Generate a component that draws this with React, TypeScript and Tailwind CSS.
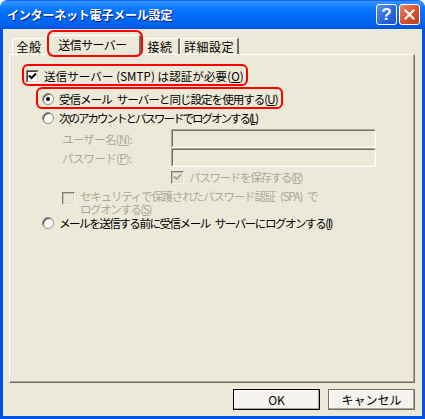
import React from "react";

const F = "font-['Noto_Sans_CJK_JP','Noto_Sans_CJK_SC',sans-serif]";

function CheckBox({ checked, disabled }: { checked?: boolean; disabled?: boolean }) {
  return (
    <span
      className={`relative inline-block w-[13px] h-[13px] shrink-0 border border-t-[#7f7d72] border-l-[#7f7d72] border-r-[#f5f4ee] border-b-[#f5f4ee] ${disabled ? "bg-[#ECE9D8]" : "bg-white"}`}
    >
      <span className={`absolute inset-0 border border-t-[#403f3a] border-l-[#403f3a] border-r-[#dcd8c6] border-b-[#dcd8c6] ${disabled ? "border-t-[#c2bfb0] border-l-[#c2bfb0]" : ""}`} />
      {checked && (
        <svg className="absolute left-[1px] top-[1px]" width="9" height="9" viewBox="0 0 9 9">
          <path d="M1 3.5 L3.5 6 L8 1.5" stroke={disabled ? "#aca899" : "#000"} strokeWidth="2" fill="none" />
        </svg>
      )}
    </span>
  );
}

function Radio({ checked }: { checked?: boolean }) {
  return (
    <span className="relative inline-block w-[12px] h-[12px] shrink-0 rounded-full bg-white border border-[#8d8a7d] shadow-[inset_1px_1px_0_#4a4943]">
      {checked && <span className="absolute left-[3px] top-[3px] w-[4px] h-[4px] rounded-full bg-black" />}
    </span>
  );
}

function Input() {
  return (
    <div className="w-[205px] h-[19px] border border-t-[#aca899] border-l-[#aca899] border-r-white border-b-white">
      <div className="w-full h-full border border-t-[#716f64] border-l-[#716f64] border-r-[#f1efe2] border-b-[#f1efe2] bg-[#ECE9D8]" />
    </div>
  );
}

function Gap() {
  return <span className="inline-block w-[5px]" />;
}

function Tab({ label, selected, first, w, t }: { label: string; selected?: boolean; first?: boolean; w: string; t: string }) {
  return (
    <div
      className={`relative flex items-center justify-center bg-[#ECE9D8] border-t border-l border-white border-r-2 border-r-[#716f64] ${first ? "rounded-tl-[3px]" : ""} ${w} ${
        selected ? "h-[20px] z-10 -mb-[1px] -ml-[2px] pb-[1px]" : "h-[16px] pt-[1px]"
      }`}
    >
      <span className={`text-[12px] leading-none text-black ${t}`}>{label}</span>
    </div>
  );
}

export default function App() {
  return (
    <div className={`w-[425px] h-[419px] ${F} bg-[#0054E3] rounded-t-[8px] flex flex-col overflow-hidden relative select-none`}>
      {/* title bar */}
      <div className="h-[29px] shrink-0 flex items-center pl-[7px] pr-[5px] rounded-t-[8px] bg-[linear-gradient(to_bottom,#0058EE_0%,#3A93FF_6%,#288EFF_12%,#127DFF_25%,#036FFC_45%,#0262EE_85%,#0057E5_93%,#0054E3_100%)]">
        <span className="text-white font-bold text-[12px] tracking-[-0.2px] [text-shadow:1px_1px_0_#0a1f80] flex-1 pt-[1px]">インターネット電子メール設定</span>
        <div className="flex gap-[2px]">
          <div className="w-[21px] h-[21px] rounded-[3px] border border-white bg-[linear-gradient(135deg,#5b93f4_0%,#2a67e4_55%,#1c54c8_100%)] flex items-center justify-center">
            <span className="text-white font-bold text-[17px] leading-none font-['Liberation_Sans',sans-serif]">?</span>
          </div>
          <div className="w-[21px] h-[21px] rounded-[3px] border border-white bg-[linear-gradient(135deg,#e8866a_0%,#d8502c_55%,#c03c18_100%)] flex items-center justify-center">
            <svg width="11" height="11" viewBox="0 0 11 11">
              <path d="M1.5 1.5 L9.5 9.5 M9.5 1.5 L1.5 9.5" stroke="#fff" strokeWidth="2.2" strokeLinecap="square" />
            </svg>
          </div>
        </div>
      </div>

      {/* body */}
      <div className="flex-1 mx-[3px] mb-[3px] bg-[#ECE9D8] flex flex-col pl-[6px] pr-[7px] pt-[6px]">
        {/* tabs */}
        <div className="flex items-end h-[19px] pl-[3px]">
          <Tab label="全般" first w="w-[35px]" t="tracking-[0.5px]" />
          <Tab label="送信サーバー" selected w="w-[96px]" t="tracking-[-0.6px]" />
          <Tab label="接続" w="w-[39px]" t="tracking-[0.5px]" />
          <Tab label="詳細設定" w="w-[59px]" t="tracking-[0.5px]" />
        </div>
        {/* panel */}
        <div className="h-[329px] border-t border-l border-white border-r border-b border-r-[#716f64] border-b-[#716f64] shadow-[inset_-1px_-1px_0_#aca899] flex flex-col pt-[13px] text-[11.5px] leading-[16px] text-black">
          <div className="flex items-center gap-[5px] pl-[16px] h-[16px]">
            <CheckBox checked />
            <span className="tracking-[0.1px]">送信サーバー (SMTP) は認証が必要(<u>O</u>)</span>
          </div>
          <div className="flex items-center gap-[5px] pl-[32px] h-[16px] mt-[7px]">
            <Radio checked />
            <span className="tracking-[-0.95px]">受信メール<Gap />サーバーと同じ設定を使用する(<u>U</u>)</span>
          </div>
          <div className="flex items-center gap-[5px] pl-[32px] h-[16px] mt-[3px]">
            <Radio />
            <span className="tracking-[-2px]">次のアカウントとパスワードでログオンする(<u>L</u>)</span>
          </div>
          <div className="flex items-center pl-[52px] mt-[3px]">
            <span className="w-[109px] text-[#aca899] tracking-[-0.7px]">ユーザー名(<u>N</u>):</span>
            <Input />
          </div>
          <div className="flex items-center pl-[52px]">
            <span className="w-[109px] text-[#aca899] tracking-[-0.7px]">パスワード(<u>P</u>):</span>
            <Input />
          </div>
          <div className="flex items-center gap-[5px] pl-[161px] h-[16px] mt-[2px]">
            <CheckBox checked disabled />
            <span className="text-[#aca899] tracking-[-1.3px]">パスワードを保存する(<u>R</u>)</span>
          </div>
          <div className="flex items-start gap-[5px] pl-[52px] mt-[5px]">
            <span className="mt-[2px] flex"><CheckBox disabled /></span>
            <div className="flex flex-col text-[#aca899]">
              <span className="h-[13px] leading-[13px] tracking-[-1.2px]">セキュリティで保護されたパスワード認証<Gap />(SPA)<Gap />で</span>
              <span className="h-[13px] leading-[13px] tracking-[-1.4px]">ログオンする(<u>S</u>)</span>
            </div>
          </div>
          <div className="flex items-center gap-[5px] pl-[32px] h-[16px] mt-[-1px]">
            <Radio />
            <span className="tracking-[-1.45px]">メールを送信する前に受信メール<Gap />サーバーにログオンする(<u>I</u>)</span>
          </div>
        </div>
        {/* buttons */}
        <div className="flex justify-end gap-[8px] mt-[6px]">
          {["OK", "キャンセル"].map((t, i) => (
            <div
              key={t}
              className={`w-[87px] h-[21px] flex items-center justify-center bg-[#f4f3ee] border ${i === 0 ? "border-black" : "border-[#716f64]"} shadow-[inset_-1px_-1px_0_#aca899,inset_1px_1px_0_#fff]`}
            >
              <span className="text-[12px] leading-none">{t}</span>
            </div>
          ))}
        </div>
      </div>

      {/* red highlight overlays */}
      <div className="absolute left-[47px] top-[30px] w-[96px] h-[27px] border-[2px] border-[#ff0000] rounded-[7px] pointer-events-none z-20" />
      <div className="absolute left-[22px] top-[64px] w-[226px] h-[22px] border-[2px] border-[#ff0000] rounded-[6px] pointer-events-none z-20" />
      <div className="absolute left-[36px] top-[87px] w-[247px] h-[22px] border-[2px] border-[#ff0000] rounded-[6px] pointer-events-none z-20" />
    </div>
  );
}
